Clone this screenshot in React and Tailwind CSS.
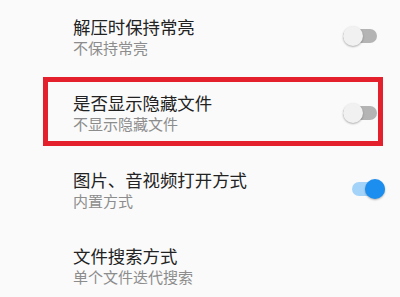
import React from "react";

const rows = [
  { title: "解压时保持常亮", sub: "不保持常亮", toggle: "off" },
  { title: "是否显示隐藏文件", sub: "不显示隐藏文件", toggle: "off", marked: true },
  { title: "图片、音视频打开方式", sub: "内置方式", toggle: "on" },
  { title: "文件搜索方式", sub: "单个文件迭代搜索", toggle: null },
];

function Switch({ on }) {
  if (on) {
    return (
      <div className="flex items-center justify-end w-[33px] h-[14px] mr-[15px] rounded-full bg-[#a4d3f9]">
        <div className="shrink-0 w-[20px] h-[20px] rounded-full bg-[#1b8ef0] shadow-[0_1px_2px_rgba(0,0,0,0.3)]" />
      </div>
    );
  }
  return (
    <div className="flex items-center justify-start w-[34px] h-[14px] mr-[23px] rounded-full bg-[#b4b4b4]">
      <div className="shrink-0 w-[20px] h-[20px] rounded-full bg-[#f1f1f1] shadow-[0_1px_2px_rgba(0,0,0,0.3)]" />
    </div>
  );
}

export default function App() {
  return (
    <div
      className="w-[400px] h-[297px] overflow-hidden bg-[#fafafa]"
      style={{ fontFamily: '"Noto Sans CJK SC", "Noto Sans", sans-serif' }}
    >
      <div className="-mt-[2px]">
        {rows.map((row) => (
          <div key={row.title} className="relative h-[76.5px] flex items-center pl-[73px]">
            <div className="flex-1">
              <div className="text-[17.4px] leading-[23px] text-[#222222]">{row.title}</div>
              <div className="text-[15px] leading-[20px] text-[#8c8c8c]">{row.sub}</div>
            </div>
            {row.toggle && <Switch on={row.toggle === "on"} />}
            {row.marked && (
              <div className="absolute left-[43px] top-[2.5px] w-[340px] h-[69px] border-[5px] border-[#e3202b]" />
            )}
          </div>
        ))}
      </div>
    </div>
  );
}
